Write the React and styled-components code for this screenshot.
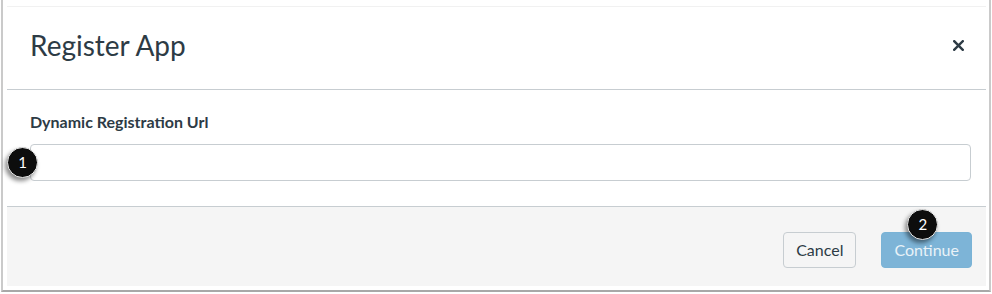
import React from 'react'
import styled, { createGlobalStyle } from 'styled-components'

const GlobalStyle = createGlobalStyle`
  html, body {
    margin: 0;
    padding: 0;
    background: #fff;
  }
  body {
    font-family: Lato, "Open Sans", sans-serif;
    color: #2d3b45;
  }
  * {
    box-sizing: border-box;
  }
`

const Frame = styled.div`
  margin-left: 1px;
  width: 990px;
  height: 292px;
  border-left: 2px solid #cacaca;
  border-right: 2px solid #cacaca;
  border-bottom: 2px solid #a8a8a8;
  padding: 6px 3px 4px 4px;
  background: #fff;
`

const Dialog = styled.div`
  display: flex;
  flex-direction: column;
  height: 100%;
  background: #fff;
`

const Header = styled.div`
  height: 84px;
  display: flex;
  align-items: center;
  justify-content: space-between;
  padding: 0 20px 4px 23px;
  border-top: 1px solid #f1f1f1;
  border-bottom: 1px solid #c7cdd1;
`

const Title = styled.h2`
  margin: 0;
  font-size: 28px;
  font-weight: 400;
  line-height: 1.2;
  color: #2d3b45;
`

const CloseButton = styled.button`
  background: transparent;
  border: 0;
  padding: 0;
  width: 16px;
  height: 16px;
  display: flex;
  align-items: center;
  justify-content: center;
  cursor: pointer;
  color: #2d3b45;
  margin-top: -2px;
`

const Body = styled.div`
  padding: 22px 15px 25px 23px;
`

const Label = styled.label`
  display: block;
  font-size: 16px;
  font-weight: 700;
  line-height: 20px;
  margin-bottom: 12px;
  color: #2d3b45;
`

const Field = styled.div`
  position: relative;
`

const Input = styled.input`
  display: block;
  width: 100%;
  height: 37px;
  border: 1px solid #c7cdd1;
  border-radius: 4px;
  padding: 0 12px;
  font-family: inherit;
  font-size: 16px;
  background: #fff;
  outline: none;
`

const Footer = styled.div`
  flex: 1;
  display: flex;
  justify-content: flex-end;
  align-items: flex-start;
  gap: 25px;
  padding: 25px 14px 0 0;
  background: #f5f5f5;
  border-top: 1px solid #c7cdd1;
`

const Button = styled.button`
  position: relative;
  height: 36px;
  padding: 0 12px;
  border-radius: 4px;
  font-family: inherit;
  font-size: 16px;
  line-height: 1;
  cursor: pointer;
  border: 1px solid ${({ $primary }) => ($primary ? '#7ab3d6' : '#c7cdd1')};
  background: ${({ $primary }) => ($primary ? '#7db4d7' : '#f5f5f5')};
  color: ${({ $primary }) => ($primary ? '#e9f2f8' : '#2d3b45')};
`

const Badge = styled.span`
  position: absolute;
  left: ${({ $left }) => $left}px;
  top: ${({ $top }) => $top}px;
  width: 31px;
  height: 31px;
  border-radius: 50%;
  background: #0d0d0d;
  border: 1.5px solid #e6e6e6;
  box-shadow: -2px 3px 4px rgba(0, 0, 0, 0.45);
  color: #fff;
  font-family: Lato, sans-serif;
  font-size: 15px;
  font-weight: 400;
  display: flex;
  align-items: center;
  justify-content: center;
  line-height: 1;
  z-index: 2;
`

const App = () => {
  return (
    <>
      <GlobalStyle />
      <Frame>
        <Dialog>
          <Header>
            <Title>Register App</Title>
            <CloseButton aria-label="Close">
              <svg width="11" height="11" viewBox="0 0 11 11">
                <path d="M1.2 1.2 L9.8 9.8 M9.8 1.2 L1.2 9.8" stroke="#2d3b45" strokeWidth="2.4" strokeLinecap="square" />
              </svg>
            </CloseButton>
          </Header>
          <Body>
            <Label htmlFor="reg-url">Dynamic Registration Url</Label>
            <Field>
              <Input id="reg-url" />
              <Badge $left={-23} $top={3}>1</Badge>
            </Field>
          </Body>
          <Footer>
            <Button>Cancel</Button>
            <Button $primary>
              Continue
              <Badge $left={25} $top={-24}>2</Badge>
            </Button>
          </Footer>
        </Dialog>
      </Frame>
    </>
  )
}

export default App
